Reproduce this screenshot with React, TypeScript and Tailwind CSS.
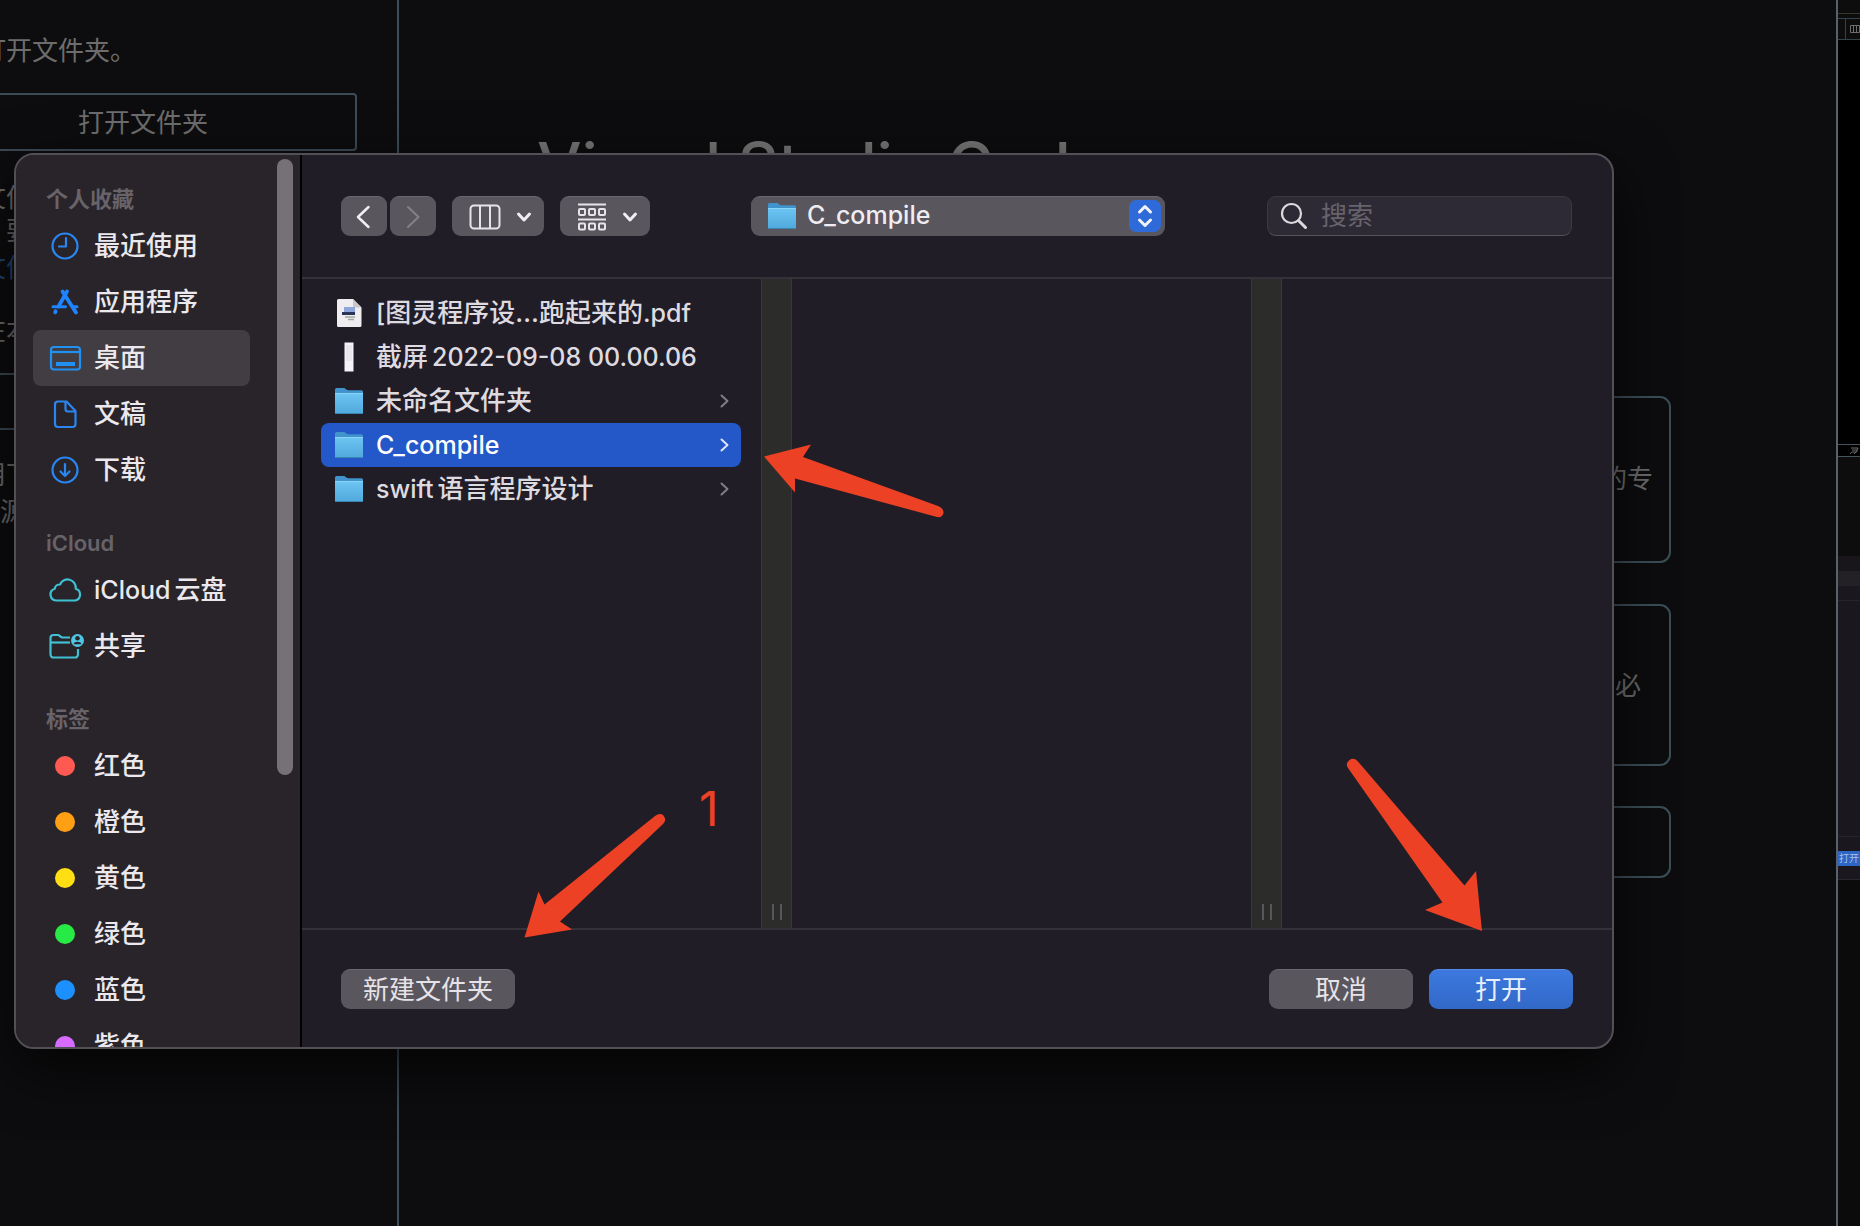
import type { ReactNode } from "react";

const SANS = "font-['Inter','Noto_Sans_CJK_SC',sans-serif]";

/* ---------- icons ---------- */

function ClockIcon() {
  return (
    <svg width="34" height="34" viewBox="0 0 34 34" fill="none" stroke="#2a86f0" strokeWidth="2.200" strokeLinecap="round" strokeLinejoin="round" aria-hidden="true">
      <circle cx="17" cy="17" r="12.5" />
      <path d="M18 9v8.5h-7" />
    </svg>
  );
}

function AppsIcon() {
  return (
    <svg width="34" height="34" viewBox="0 0 34 34" fill="none" stroke="#1f84ff" strokeWidth="3.8" strokeLinecap="round" aria-hidden="true">
      <path d="M19 6.5L10.5 21.5" />
      <path d="M14.5 6.5L28 27.5" />
      <path d="M5 21.8H17.5M24.5 21.8H29" strokeWidth="3" />
      <path d="M7.6 26.2L7.2 27.2" />
    </svg>
  );
}

function DesktopIcon() {
  return (
    <svg width="34" height="34" viewBox="0 0 34 34" fill="none" stroke="#2090f2" strokeWidth="2.200" strokeLinejoin="round" aria-hidden="true">
      <rect x="3" y="6" width="29" height="22.500" rx="3" />
      <path d="M3 11h29" />
      <rect x="8" y="21" width="19" height="4" fill="#2090f2" stroke="none" />
    </svg>
  );
}

function DocumentIcon() {
  return (
    <svg width="34" height="34" viewBox="0 0 34 34" fill="none" stroke="#2a86f0" strokeWidth="2.200" strokeLinejoin="round" aria-hidden="true">
      <path d="M10 4.500h8.500L27.500 14v13a3 3 0 0 1-3 3H10a3 3 0 0 1-3-3V7.500a3 3 0 0 1 3-3z" />
      <path d="M17.500 4.500V12a2.500 2.500 0 0 0 2.500 2.500h7.500" />
    </svg>
  );
}

function DownloadIcon() {
  return (
    <svg width="34" height="34" viewBox="0 0 34 34" fill="none" stroke="#2a86f0" strokeWidth="2.200" strokeLinecap="round" strokeLinejoin="round" aria-hidden="true">
      <circle cx="17" cy="17" r="12.500" />
      <path d="M17 11v12M12.500 18.500L17 23l4.500-4.500" />
    </svg>
  );
}

function CloudIcon() {
  return (
    <svg width="34" height="34" viewBox="0 0 34 34" fill="none" stroke="#3fc0d3" strokeWidth="2.200" strokeLinejoin="round" aria-hidden="true">
      <path d="M8 27.500a6 6 0 0 1-1.300-11.700 5 5 0 0 1 5.300-4.300 8.200 8.200 0 0 1 15.700 4.200 6.100 6.100 0 0 1-.4 11.800z" />
    </svg>
  );
}

function SharedIcon() {
  return (
    <svg className="shrink-0" width="34" height="34" viewBox="1 0 34 34" fill="none" stroke="#3fc0d3" strokeWidth="2.200" strokeLinejoin="round" overflow="visible" aria-hidden="true">
      <path d="M31 20v5.500a3 3 0 0 1-3 3H6.500a3 3 0 0 1-3-3V9a3 3 0 0 1 3-3h4.200c1 0 1.600.4 2.300 1.100.8.800 1.400 1.400 2.500 1.400H23" />
      <path d="M3.500 13.500H23" />
      <circle cx="30.500" cy="11.500" r="6.500" fill="#4fc6e6" stroke="none" />
      <circle cx="30.500" cy="9.300" r="2.300" fill="#28242a" stroke="none" />
      <path d="M26.600 15.200c.6-3.200 7.200-3.200 7.800 0z" fill="#28242a" stroke="none" />
    </svg>
  );
}

function FolderIcon() {
  return (
    <svg width="30" height="28" viewBox="0 0 30 28" aria-hidden="true">
      <defs>
        <linearGradient id="folderFront" x1="0" y1="0" x2="0" y2="1">
          <stop offset="0" stopColor="#6cc4f2" />
          <stop offset="1" stopColor="#4fa8dc" />
        </linearGradient>
      </defs>
      <path d="M1 2.500A1.500 1.500 0 0 1 2.500 1h7c1 0 1.600.4 2.300 1.100.7.700 1.300 1.200 2.300 1.200h13.400A1.500 1.500 0 0 1 29 4.800V10H1z" fill="#4193cd" />
      <path d="M1 7h28v18.500a1.500 1.500 0 0 1-1.500 1.500h-25A1.500 1.500 0 0 1 1 25.500z" fill="url(#folderFront)" />
      <path d="M1 6.500h28" stroke="#8ad4f8" strokeWidth="1" />
      <path d="M1.500 26.500h27" stroke="#3b86b5" strokeWidth="1" />
    </svg>
  );
}

function PdfIcon() {
  return (
    <svg width="30" height="30" viewBox="0 0 30 30" aria-hidden="true">
      <path d="M3 2.500A1.500 1.500 0 0 1 4.500 1H19l8.500 8.500v18a1.500 1.500 0 0 1-1.500 1.500H4.500A1.500 1.500 0 0 1 3 27.500z" fill="#efedef" />
      <path d="M19 1l8.500 8.500H20.500A1.500 1.500 0 0 1 19 8z" fill="#c9c7cb" />
      <rect x="10" y="9" width="11" height="5" fill="#8fa6da" />
      <rect x="8" y="14" width="13" height="3" fill="#2a3557" />
      <path d="M11 19h10M14 21.500h6" stroke="#a4a7a4" strokeWidth="1.500" />
    </svg>
  );
}

function ScreenshotIcon() {
  return (
    <svg width="30" height="30" viewBox="0 0 30 30" aria-hidden="true">
      <rect x="10.500" y="0.500" width="9" height="29" fill="#f4f2f6" />
      <rect x="12" y="3" width="6" height="16" fill="#e9e6ed" />
    </svg>
  );
}

function ChevronDown() {
  return (
    <svg width="16" height="12" viewBox="0 0 16 12" fill="none" stroke="#f0eef2" strokeWidth="3" strokeLinecap="round" strokeLinejoin="round" aria-hidden="true">
      <path d="M2.500 3L8 9l5.500-6" />
    </svg>
  );
}

/* ---------- data ---------- */

type SidebarItem = { label: string; icon?: ReactNode; dot?: string; selected?: boolean };

const sections: { title: string; items: SidebarItem[] }[] = [
  {
    title: "个人收藏",
    items: [
      { label: "最近使用", icon: <ClockIcon /> },
      { label: "应用程序", icon: <AppsIcon /> },
      { label: "桌面", icon: <DesktopIcon />, selected: true },
      { label: "文稿", icon: <DocumentIcon /> },
      { label: "下载", icon: <DownloadIcon /> },
    ],
  },
  {
    title: "iCloud",
    items: [
      { label: "iCloud云盘", icon: <CloudIcon /> },
      { label: "共享", icon: <SharedIcon /> },
    ],
  },
  {
    title: "标签",
    items: [
      { label: "红色", dot: "bg-[#ff5a52]" },
      { label: "橙色", dot: "bg-[#ff9f14]" },
      { label: "黄色", dot: "bg-[#ffdf14]" },
      { label: "绿色", dot: "bg-[#28ea46]" },
      { label: "蓝色", dot: "bg-[#1c90ff]" },
      { label: "紫色", dot: "bg-[#d66cff]" },
    ],
  },
];

const files: { name: string; icon: ReactNode; folder?: boolean; selected?: boolean }[] = [
  { name: "[图灵程序设…跑起来的.pdf", icon: <PdfIcon /> },
  { name: "截屏2022-09-08 00.00.06", icon: <ScreenshotIcon /> },
  { name: "未命名文件夹", icon: <FolderIcon />, folder: true },
  { name: "C_compile", icon: <FolderIcon />, folder: true, selected: true },
  { name: "swift语言程序设计", icon: <FolderIcon />, folder: true },
];

/* Latin runs are set one step smaller than the Chinese characters beside them,
   with a small gap where a word or number meets a Chinese character. */
function Mixed({ text }: { text: string }) {
  const runs = text.split(/([\x20-\x7e]+)/).filter(Boolean);
  return (
    <span className="whitespace-pre">
      {runs.map((run, i) => {
        if (!/^[\x20-\x7e]+$/.test(run)) return run;
        const before = i > 0 && /^\w/.test(run);
        const after = i < runs.length - 1 && /\w$/.test(run);
        return (
          <span key={i} className={`text-[25px] ${before ? "ml-1" : ""} ${after ? "mr-1" : ""}`}>
            {run}
          </span>
        );
      })}
    </span>
  );
}

/* ---------- dialog parts ---------- */

function Sidebar() {
  return (
    <nav aria-label="位置" className="relative h-[892px] w-[286px] shrink-0 overflow-hidden border-r-2 border-black bg-[#28242a]">
      <div className="flex flex-col gap-7 pt-[27px] pr-[50px] pl-[17px]">
        {sections.map((section) => (
          <section key={section.title}>
            <h2 className="h-9 pl-[13px] text-[22px] leading-[34px] font-semibold text-[#676369]">{section.title}</h2>
            <ul>
              {section.items.map((item) => (
                <li key={item.label}>
                  <button
                    type="button"
                    className={
                      item.selected
                        ? "flex h-14 w-full items-center gap-3 rounded-lg bg-[#413d42] pl-[15px] text-left"
                        : "flex h-14 w-full items-center gap-3 rounded-lg pl-[15px] text-left"
                    }
                  >
                    <span className="flex w-[34px] shrink-0 justify-center">
                      {item.icon ?? <span className={`size-5 rounded-full ${item.dot}`} />}
                    </span>
                    <span className="text-[26px] leading-[36px] font-medium text-[#ebe8ee]">
                      <Mixed text={item.label} />
                    </span>
                  </button>
                </li>
              ))}
            </ul>
          </section>
        ))}
      </div>
      <div className="absolute top-1 right-[7px] h-[616px] w-4 rounded-full bg-[#757177]" />
    </nav>
  );
}

function Toolbar() {
  const btn = "flex h-10 items-center justify-center rounded-[9px] border-t border-[#6b6770] bg-[#5a565e]";
  return (
    <header className="flex h-[124px] shrink-0 items-center border-b-2 border-[#343138] pr-10 pl-[39px]">
      <div className="flex gap-[3px]">
        <button type="button" aria-label="后退" className={`${btn} w-[46px]`}>
          <svg width="16" height="24" viewBox="0 0 16 24" fill="none" stroke="#f0eef2" strokeWidth="2.500" strokeLinecap="round" strokeLinejoin="round" aria-hidden="true">
            <path d="M12.500 2L2 12l10.500 10" />
          </svg>
        </button>
        <button type="button" aria-label="前进" disabled className={`${btn} w-[46px]`}>
          <svg width="16" height="24" viewBox="0 0 16 24" fill="none" stroke="#858189" strokeWidth="2" strokeLinecap="round" strokeLinejoin="round" aria-hidden="true">
            <path d="M3 2l10.500 10L3 22" />
          </svg>
        </button>
      </div>
      <button type="button" aria-label="分栏显示" className={`${btn} ml-4 w-[92px] gap-[15px] pl-1`}>
        <svg width="32" height="26" viewBox="0 0 32 26" fill="none" stroke="#e6e4e8" strokeWidth="2" aria-hidden="true">
          <rect x="1.500" y="1.500" width="29" height="23" rx="3.500" />
          <path d="M11 1.500v23M21 1.500v23" />
        </svg>
        <ChevronDown />
      </button>
      <button type="button" aria-label="分组" className={`${btn} ml-4 w-[90px] gap-[15px] pl-1`}>
        <svg width="30" height="28" viewBox="0 0 30 28" fill="none" stroke="#e6e4e8" strokeWidth="2" aria-hidden="true">
          <path d="M1 1.500h28M1 16.500h28" />
          <rect x="2" y="6" width="6" height="6" rx="1" />
          <rect x="12" y="6" width="6" height="6" rx="1" />
          <rect x="22" y="6" width="6" height="6" rx="1" />
          <rect x="2" y="20.500" width="6" height="6" rx="1" />
          <rect x="12" y="20.500" width="6" height="6" rx="1" />
          <rect x="22" y="20.500" width="6" height="6" rx="1" />
        </svg>
        <ChevronDown />
      </button>
      <div className="relative ml-[101px] w-[414px]">
        <select
          aria-label="当前文件夹"
          className="h-10 w-full appearance-none rounded-[9px] border-t border-[#6b6770] bg-[#5a565e] pb-[2px] pl-14 text-[25px] font-medium text-[#efedf1]"
        >
          <option>C_compile</option>
        </select>
        <span className="pointer-events-none absolute inset-y-0 left-4 flex items-center">
          <FolderIcon />
        </span>
        <span className="pointer-events-none absolute inset-y-0 right-1 flex items-center">
          <span className="flex size-8 items-center justify-center rounded-[7px] bg-[#2f6bd8]">
            <svg width="16" height="24" viewBox="0 0 16 24" fill="none" stroke="#f2f4fb" strokeWidth="3" strokeLinecap="round" strokeLinejoin="round" aria-hidden="true">
              <path d="M2.500 8L8 2.500 13.500 8M2.500 16L8 21.500l5.500-5.500" />
            </svg>
          </span>
        </span>
      </div>
      <label className="ml-auto flex h-10 w-[305px] items-center gap-[13px] rounded-[9px] border border-[#3c3941] border-b-[#55515a] bg-[#2e2a35] px-3">
        <svg className="shrink-0" width="28" height="28" viewBox="0 0 28 28" fill="none" stroke="#dcd9df" strokeLinecap="round" aria-hidden="true">
          <circle cx="11.500" cy="11.500" r="9.500" strokeWidth="2.200" />
          <path d="M18.500 18.500L25.500 25.500" strokeWidth="3" />
        </svg>
        <input type="search" aria-label="搜索" placeholder="搜索" className="w-full min-w-0 bg-transparent text-[26px] leading-[36px] outline-none placeholder:text-[#67636d]" />
      </label>
    </header>
  );
}

function Divider() {
  return (
    <div className="flex w-[31px] shrink-0 items-end justify-center gap-[6px] border-x border-[#39373a] bg-[#2c2c2b] pb-2">
      <span className="h-4 w-[2px] bg-[#57565a]" />
      <span className="h-4 w-[2px] bg-[#57565a]" />
    </div>
  );
}

function Browser() {
  return (
    <div className="flex h-[649px]">
      <ul className="w-[459px] shrink-0 pt-3 pr-5 pl-[19px]">
        {files.map((file) => (
          <li key={file.name}>
            <button
              type="button"
              className={
                file.selected
                  ? "flex h-11 w-full items-center gap-3 rounded-lg bg-[#2457c8] pr-3 pl-[13px] text-left text-white"
                  : "flex h-11 w-full items-center gap-3 rounded-lg pr-3 pl-[13px] text-left text-[#dedbe0]"
              }
            >
              <span className="shrink-0">{file.icon}</span>
              <span className="grow text-[26px] leading-[36px] font-medium">
                <Mixed text={file.name} />
              </span>
              {file.folder && (
                <svg
                  width="9"
                  height="14"
                  viewBox="0 0 9 14"
                  fill="none"
                  stroke={file.selected ? "#dfe6f8" : "#827e86"}
                  strokeWidth="2"
                  strokeLinecap="round"
                  strokeLinejoin="round"
                  aria-hidden="true"
                >
                  <path d="M1.500 1.500L7.500 7l-6 5.500" />
                </svg>
              )}
            </button>
          </li>
        ))}
      </ul>
      <Divider />
      <div className="w-[459px] shrink-0" />
      <Divider />
      <div className="grow" />
    </div>
  );
}

function Footer() {
  const btn = "h-10 rounded-[9px] border-t text-[26px] leading-[36px]";
  return (
    <footer className="flex h-[119px] items-start border-t-2 border-[#343138] px-[39px] pt-[39px]">
      <button type="button" className={`${btn} w-[174px] border-[#6b6770] bg-[#5a565e] text-[#e6e3e8]`}>
        新建文件夹
      </button>
      <button type="button" className={`${btn} ml-auto w-36 border-[#6b6770] bg-[#5a565e] text-[#e6e3e8]`}>
        取消
      </button>
      <button type="button" className={`${btn} ml-4 w-36 border-[#558be6] bg-linear-to-b from-[#3c78de] to-[#3269c8] text-[#e8effc]`}>
        打开
      </button>
    </footer>
  );
}

function Annotations() {
  return (
    <>
      <svg className="pointer-events-none absolute top-[287px] left-[748px]" width="184" height="80" viewBox="762 440 184 80" fill="#ed4125" aria-hidden="true">
        <path d="M764 456.500L811 444.500L803 457L938 506Q944 508.500 943.500 513Q942.500 518 937 517L795 478.500V492.500z" />
      </svg>
      <svg className="pointer-events-none absolute top-[657px] left-[508px]" width="146" height="132" viewBox="522 810 146 132" fill="#ed4125" aria-hidden="true">
        <path d="M524.500 937.500L538.500 891.500L544.500 904.500L655 816Q660 812.500 663.500 815.500Q667 820 663 824L560 921.500L572 929.500z" />
      </svg>
      <svg className="pointer-events-none absolute top-[603px] left-[1330px]" width="144" height="180" viewBox="1344 756 144 180" fill="#ed4125" aria-hidden="true">
        <path d="M1482 931L1476 871L1464.500 885.500L1357.500 761Q1353.500 757 1349.500 760Q1345 763.500 1348 768L1442.500 902.500L1425 910z" />
      </svg>
      <span className="pointer-events-none absolute top-[628px] left-[685px] text-[48px] leading-[56px] text-[#ed4125]">1</span>
    </>
  );
}

function OpenDialog() {
  return (
    <div className="absolute top-[153px] right-[246px] left-[14px]">
      <div role="dialog" aria-label="打开文件夹" className="flex overflow-hidden rounded-[20px] border-2 border-[#535055] bg-[#211d27] shadow-[0_20px_60px_rgba(0,0,0,0.7)]">
        <Sidebar />
        <div className="min-w-0 grow">
          <Toolbar />
          <Browser />
          <Footer />
        </div>
      </div>
      <Annotations />
    </div>
  );
}

/* ---------- editor window behind the dialog ---------- */

function Explorer() {
  return (
    <aside className="w-[399px] shrink-0 overflow-hidden border-r-2 border-[#3d4d5a] pt-[34px] text-[26px] leading-[33px] text-[#6d6d6e]">
      <p className="-ml-5">打开文件夹。</p>
      <button type="button" className="mt-[26px] -ml-[71px] block h-[58px] w-[428px] rounded-[4px] border-2 border-[#3b4b57]">
        打开文件夹
      </button>
      <p className="mt-[30px] -ml-5">文件</p>
      <p className="ml-[6px]">要</p>
      <p className="mt-1 -ml-5">
        <a href="#add" className="text-[#234574]">
          文件
        </a>
      </p>
      <p className="mt-[30px] -ml-5">在本</p>
      <div className="mt-[26px] -ml-[71px] h-[57px] w-[428px] rounded-[4px] border-2 border-[#3b4b57]" />
      <p className="mt-7 -ml-5">用下</p>
      <p className="mt-1">源</p>
    </aside>
  );
}

function Welcome() {
  const card = "w-[200px] rounded-[11px] border-2 border-[#3b4f58] pr-4 text-right";
  return (
    <main className="flex min-w-0 grow flex-col items-end border-r-2 border-[#59616a] pr-[165px] text-[26px] leading-[36px] text-[#6d6d6e]">
      <h1 className="mt-[125px] w-full pl-[138px] text-[63px] leading-[80px] font-medium text-[#757575]">Visual Studio Code</h1>
      <div className={`${card} mt-[191px] h-[167px] pt-[63px]`}>的专</div>
      <div className={`${card} mt-[41px] h-[162px] pt-[62px] pr-7`}>必</div>
      <div className={`${card} mt-10 h-[72px]`} />
    </main>
  );
}

function NextWindow() {
  return (
    <div className="flex w-[22px] shrink-0 flex-col overflow-hidden bg-[#0d0d0d] text-[10px] leading-[12px]">
      <div className="h-[14px] border-b border-[#3a352d]" />
      <div className="mt-[4px] flex h-[22px] items-center border-y border-[#33434c]">
        <span className="h-full w-[8px] border-r border-[#33434c]" />
        <svg className="ml-[4px] shrink-0" width="10" height="8" viewBox="0 0 10 8" fill="none" stroke="#6d6d6e" aria-hidden="true">
          <path d="M.5.5h9v7h-9zM3.500.5v7M6.500.5v7" />
        </svg>
      </div>
      <div className="h-[404px] bg-black" />
      <div className="flex h-[13px] items-center justify-end border-y border-[#44545c] bg-black">
        <svg width="11" height="8" viewBox="0 0 11 8" fill="none" stroke="#6d6d6e" aria-hidden="true">
          <path d="M2 1h7L7.500 5H3M3 3h5M1 7l2-2M5 7l3-3" />
        </svg>
      </div>
      <div className="h-[99px]" />
      <div className="h-[15px] bg-[#18161b]" />
      <div className="h-[15px] bg-[#232026]" />
      <div className="h-[15px] border-b border-[#26232a] bg-[#1a171f]" />
      <div className="h-[236px] border-b border-[#26232a] bg-[#1a171f]" />
      <div className="h-[14px] bg-[#1a171f]" />
      <div className="h-[15px] bg-[#2c65c4] pl-px text-[10px] leading-[15px] whitespace-nowrap text-[#a9bfe6]">打开</div>
      <div className="h-[14px] border-b border-[#2a282d] bg-[#1a171f]" />
      <div className="grow bg-[#0b0b0b]" />
    </div>
  );
}

export default function App() {
  return (
    <div className={`${SANS} relative flex min-h-screen overflow-hidden bg-[#0d0d0f]`}>
      <Explorer />
      <Welcome />
      <NextWindow />
      <OpenDialog />
    </div>
  );
}
